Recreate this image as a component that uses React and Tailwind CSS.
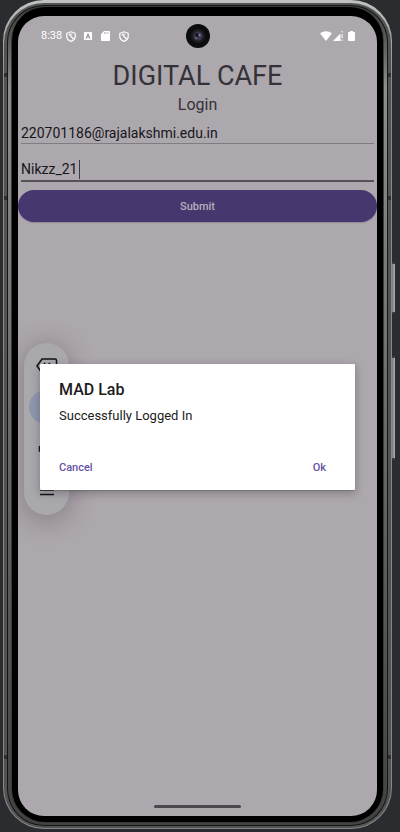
import React from "react";

function BlockedShield() {
  return (
    <svg viewBox="0 0 10 11" className="h-[11px] w-[10px]" fill="none" stroke="#fff" strokeWidth="1.2">
      <path d="M5 0.800 9.200 2.300V5.500c0 2.400-1.800 4-4.200 4.900C2.600 9.500.8 7.900.8 5.500V2.300Z" />
      <path d="M3 2.800 7.400 8" />
      <path d="M3.600 3.200h2.600" strokeWidth="0.800" />
    </svg>
  );
}

function StatusBar() {
  return (
    <header className="flex h-10 items-center justify-between pl-[23px] pr-[22px] text-[11px] text-white">
      <div className="flex items-center">
        <span className="w-[25px]">8:38</span>
        <BlockedShield />
        <svg viewBox="0 0 8 8" className="ml-2 h-2 w-2">
          <rect width="8" height="8" rx="0.500" fill="#fff" />
          <path d="M2 6.500 4 1.800 6 6.500M2.800 5h2.400" fill="none" stroke="#8d888d" strokeWidth="1" />
        </svg>
        <svg viewBox="0 0 9 10" className="ml-[9px] h-[10px] w-[9px]">
          <path d="M3 0h5.200q.8 0 .8.800v8.400q0 .8-.8.800H.8Q0 10 0 9.200V3Z" fill="#fff" />
          <path d="M3.500 1v2M5.200 1v2M7 1v2" stroke="#aca7ac" strokeWidth="0.700" />
        </svg>
        <span className="ml-[9px] flex">
          <BlockedShield />
        </span>
      </div>
      <div className="flex items-center">
        <svg viewBox="0 0 12 10" className="h-[10px] w-3">
          <path d="M0 2.300Q6-2 12 2.300L6 10Z" fill="#fff" />
        </svg>
        <svg viewBox="0 0 10 10" className="ml-px h-[10px] w-[10px]">
          <path d="M0 10 7.500 2.500V10Z" fill="#fff" />
          <path d="M9.200 0v1.500M9.200 3v4M9.200 8.500V10" stroke="#fff" strokeWidth="1" />
        </svg>
        <svg viewBox="0 0 7 10" className="ml-[5px] h-[10px] w-[7px]">
          <path d="M2 0h3v1h1q1 0 1 1v7q0 1-1 1H1q-1 0-1-1V2q0-1 1-1h1Z" fill="#fff" />
        </svg>
      </div>
    </header>
  );
}

function StylusToolbar() {
  return (
    <div className="absolute left-[6px] top-[327px] h-[172px] w-[45px] rounded-full bg-[#a9a9ad] shadow-[0_4px_24px_4px_rgba(70,55,70,0.32)]">
      <svg viewBox="0 0 45 172" className="h-full w-full" fill="none" stroke="#111114" strokeWidth="1.500">
        <circle cx="22" cy="64" r="17" fill="#8f97ad" stroke="none" />
        <path d="m13 23 5-7h13q1.500 0 1.500 1.500v11q0 1.500-1.500 1.500H18Z" />
        <path d="m20 20 6 6m0-6-6 6" />
        <path d="M15.500 103v5h14v-5" />
        <path d="M16 147h14M16 151.500h14" />
      </svg>
    </div>
  );
}

function AlertDialog() {
  return (
    <div className="absolute inset-0 flex items-center pl-[22px] pr-[22px] pt-[22px]">
      <section
        role="dialog"
        aria-labelledby="dialog-title"
        className="w-full rounded-[1px] bg-white px-[19px] pb-3 pt-4 text-[#1c1b20] shadow-[0_3px_9px_1px_rgba(40,30,40,0.28),0_1px_1px_rgba(60,60,60,0.25)]"
      >
        <h2 id="dialog-title" className="text-base font-medium leading-5">MAD Lab</h2>
        <p className="mt-[7px] text-[13px] leading-[18px]">Successfully Logged In</p>
        <div className="mt-[33px] flex justify-between pr-[10px] text-[11px] font-medium leading-5 text-[#6750a4]">
          <button type="button">Cancel</button>
          <button type="button">Ok</button>
        </div>
      </section>
    </div>
  );
}

function Screen() {
  return (
    <main className="relative flex grow flex-col overflow-hidden rounded-[26px] bg-[#ada8ad]">
      <StatusBar />
      <h1 className="mt-1 text-center text-[27px] leading-8 text-[#343238]">DIGITAL CAFE</h1>
      <h2 className="mt-[3px] text-center text-base leading-5 text-[#343238]">Login</h2>
      <form className="flex flex-col text-sm text-[#17161b]" onSubmit={(e) => e.preventDefault()}>
        <input
          type="email"
          aria-label="Email"
          defaultValue="220701186@rajalakshmi.edu.in"
          className="mx-[3px] mt-2 h-[21px] border-b border-[#817c82] bg-transparent leading-5 outline-none"
        />
        <div className="mx-[3px] mt-[14px] flex h-6 items-center border-b-2 border-[#575058]">
          <input
            type="text"
            aria-label="Password"
            defaultValue="Nikzz_21"
            className="w-[58px] bg-transparent leading-5 outline-none"
          />
          <span className="h-[19px] w-px bg-[#403649]" />
        </div>
        <button
          type="submit"
          className="mt-2 h-8 rounded-full bg-[#46376f] pt-[2px] text-[11px] font-medium text-[#b5afbb] shadow-[0_1px_1px_rgba(80,70,100,0.3)]"
        >
          Submit
        </button>
      </form>
      <div className="mx-auto mb-2 mt-auto h-[3px] w-[87px] rounded-full bg-[#4c464e]" />
      <StylusToolbar />
      <AlertDialog />
    </main>
  );
}

function Camera() {
  return (
    <svg viewBox="0 0 24 24" className="absolute left-1/2 top-6 h-6 w-6 -translate-x-1/2">
      <circle cx="12" cy="12" r="12" fill="#0c0c0e" />
      <circle cx="12" cy="12" r="7" fill="#1d1d20" />
      <circle cx="12" cy="12" r="4.500" fill="#3b3a4b" />
      <circle cx="11" cy="11" r="2" fill="#15151e" />
      <circle cx="13.500" cy="11" r="1.200" fill="#8174b0" />
      <circle cx="10" cy="14" r="1" fill="#647083" />
    </svg>
  );
}

function SideKey({ className }) {
  return (
    <span
      className={`absolute -right-[3px] w-[3px] rounded-r-[1px] border-y-2 border-[#3d3f40] bg-gradient-to-r from-[#777a7a] to-[#aeb1b1] ${className}`}
    />
  );
}

function AntennaBand({ className }) {
  return <span className={`absolute h-1 w-[3px] bg-[#2e2e2e] ${className}`} />;
}

export default function App() {
  return (
    <div className="flex min-h-screen flex-col bg-[#2b2c30] pb-[3px] pl-[3px] pr-2 [font-family:Roboto,'Liberation_Sans',sans-serif]">
      <div className="relative flex grow flex-col rounded-[41px] bg-gradient-to-b from-[#c0c2c0] via-[#898c8a] via-10% to-[#858786] px-px pb-px pt-[3px]">
        <SideKey className="top-[262px] h-[52px]" />
        <SideKey className="top-[356px] h-[104px]" />
        <div className="flex grow flex-col rounded-[40px] bg-[#525353] px-[3px] pb-[2px] pt-[2px]">
          <div className="flex grow flex-col rounded-[37px] bg-[#151515] px-px pb-px pt-px">
            <div className="flex grow flex-col rounded-[36px] bg-gradient-to-b from-[#3a3a3a] via-[#8c8e8b] via-10% to-[#424242] px-[3px] pb-[2px] pt-px">
              <div className="flex grow flex-col rounded-[34px] bg-[#3a3a3a] px-px pb-px">
                <div className="flex grow flex-col rounded-[33px] bg-black px-[6px] pb-[6px] pt-[9px]">
                  <Screen />
                </div>
              </div>
            </div>
          </div>
        </div>
        <AntennaBand className="left-px top-[73px]" />
        <AntennaBand className="right-px top-[73px]" />
        <AntennaBand className="left-px top-[196px]" />
        <AntennaBand className="right-px top-[196px]" />
        <AntennaBand className="left-px top-[755px]" />
        <AntennaBand className="right-px top-[755px]" />
        <Camera />
      </div>
    </div>
  );
}
